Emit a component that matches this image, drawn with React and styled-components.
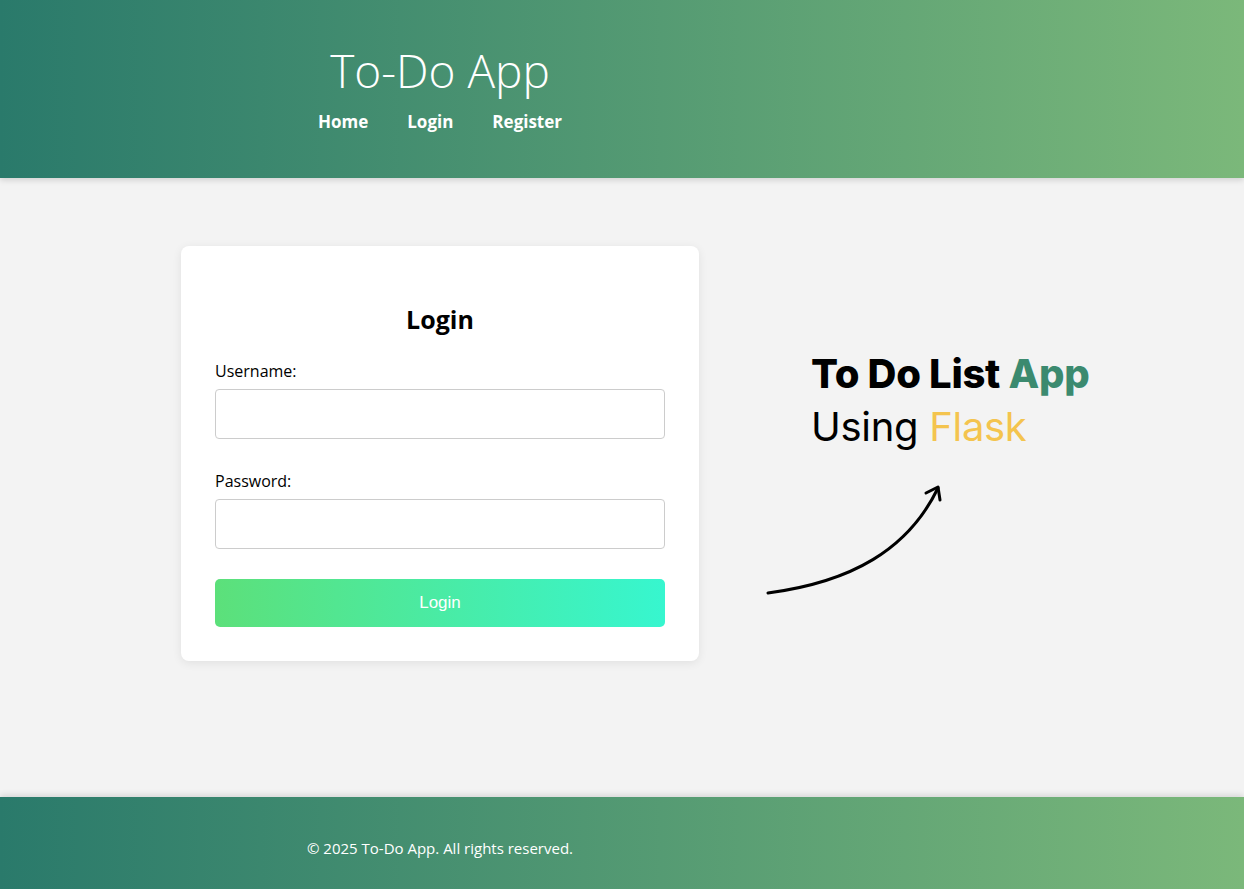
import React from 'react'
import styled, { createGlobalStyle } from 'styled-components'

const GlobalStyle = createGlobalStyle`
  body {
    margin: 0;
    background: #f3f3f3;
    font-family: "Open Sans", "Noto Sans", sans-serif;
  }
`;

const Page = styled.div`
  min-height: 100vh;
  display: flex;
  flex-direction: column;
`;

const Header = styled.header`
  height: 178px;
  box-sizing: border-box;
  background: linear-gradient(to right, #2a7a6b, #7bb87a);
  box-shadow: 0 2px 6px rgba(0, 0, 0, 0.15);
  color: #fff;
  position: relative;
  z-index: 1;
`;

const HeaderInner = styled.div`
  width: 880px;
  text-align: center;
  padding-top: 43px;
`;

const Title = styled.h1`
  margin: 0;
  font-size: 46px;
  font-weight: 300;
  line-height: 1.2;
`;

const Nav = styled.nav`
  display: flex;
  justify-content: center;
  gap: 39px;
  margin-top: 12px;
`;

const NavLink = styled.a`
  color: #fff;
  text-decoration: none;
  font-size: 17px;
  font-weight: 700;
`;

const Main = styled.main`
  flex: 1;
  display: flex;
  align-items: flex-start;
  padding: 68px 0 0 181px;
`;

const Card = styled.div`
  width: 518px;
  box-sizing: border-box;
  padding: 34px;
  background: #fff;
  border-radius: 8px;
  box-shadow: 0 2px 10px rgba(0, 0, 0, 0.08);
`;

const CardTitle = styled.h2`
  margin: 22px 0 23px;
  text-align: center;
  font-size: 25px;
  font-weight: 700;
  color: #000;
`;

const Field = styled.div`
  margin-bottom: 30px;
`;

const Label = styled.label`
  display: block;
  font-size: 16px;
  line-height: 24px;
  margin-bottom: 6px;
  color: #000;
`;

const Input = styled.input`
  display: block;
  width: 100%;
  height: 50px;
  box-sizing: border-box;
  border: 1px solid #ccc;
  border-radius: 4px;
  padding: 0 12px;
  font-size: 16px;
`;

const Button = styled.button`
  display: block;
  width: 100%;
  height: 48px;
  border: none;
  border-radius: 5px;
  background: linear-gradient(to right, #5ce07a, #37f6cf);
  color: #fff;
  font-family: "Liberation Sans", Arial, sans-serif;
  font-size: 17px;
  cursor: pointer;
`;

const Side = styled.div`
  margin-left: 67px;
  padding-top: 101px;
  display: flex;
  flex-direction: column;
`;

const Tagline = styled.div`
  margin-left: 45px;
  font-family: Inter, "Noto Sans", sans-serif;
  font-size: 40px;
  line-height: 53px;
  color: #000;
  letter-spacing: -0.3px;
`;

const Strong = styled.span`
  font-weight: 800;
`;

const Accent = styled.span`
  color: ${p => p.$color};
`;

const Arrow = styled.svg`
  margin-top: 27px;
  display: block;
`;

const Footer = styled.footer`
  height: 92px;
  box-sizing: border-box;
  padding-top: 10px;
  background: linear-gradient(to right, #2a7a6b, #7bb87a);
  box-shadow: 0 -2px 6px rgba(0, 0, 0, 0.12);
  color: #fff;
  display: flex;
  align-items: center;
`;

const FooterText = styled.p`
  width: 880px;
  margin: 0;
  text-align: center;
  font-size: 15px;
`;

export default function App() {
  return (
    <Page>
      <GlobalStyle />
      <Header>
        <HeaderInner>
          <Title>To-Do App</Title>
          <Nav>
            <NavLink href="#">Home</NavLink>
            <NavLink href="#">Login</NavLink>
            <NavLink href="#">Register</NavLink>
          </Nav>
        </HeaderInner>
      </Header>
      <Main>
        <Card>
          <CardTitle>Login</CardTitle>
          <Field>
            <Label>Username:</Label>
            <Input type="text" />
          </Field>
          <Field>
            <Label>Password:</Label>
            <Input type="password" />
          </Field>
          <Button>Login</Button>
        </Card>
        <Side>
          <Tagline>
            <Strong>To Do List <Accent $color="#3b8a6f">App</Accent></Strong>
            <br />
            Using <Accent $color="#f4c44e">Flask</Accent>
          </Tagline>
          <Arrow width="180" height="120" viewBox="0 0 180 120" fill="none" stroke="#000" strokeWidth="3" strokeLinecap="round" strokeLinejoin="round">
            <path d="M2 113 C 85 102, 142 70, 172 8" />
            <path d="M160 13 L172 7 L174 20" />
          </Arrow>
        </Side>
      </Main>
      <Footer>
        <FooterText>© 2025 To-Do App. All rights reserved.</FooterText>
      </Footer>
    </Page>
  )
}
